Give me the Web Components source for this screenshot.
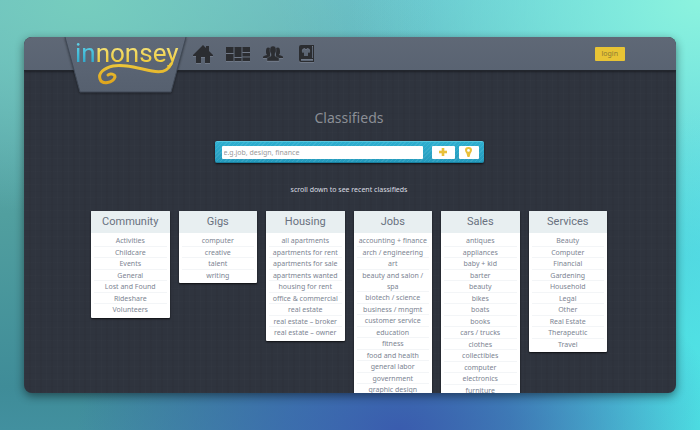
<!DOCTYPE html>
<html lang="en">
<head>
<meta charset="utf-8">
<meta name="viewport" content="width=device-width, initial-scale=1">
<title>inmonsey – Classifieds</title>
<style>
  * { box-sizing: border-box; }
  body {
    margin: 0;
    min-height: 100vh;
    font-family: "Noto Sans", "Open Sans", sans-serif;
    background:
      radial-gradient(ellipse 46% 48% at 57% 100%, #3a5cae 0%, #3a66b0cc 35%, #3a7ab000 100%),
      radial-gradient(ellipse 42% 75% at 100% 100%, #4ee6e5 0%, #4edde400 100%),
      radial-gradient(ellipse 50% 60% at 100% 0%, #8cf3de 0%, #7ce4dd00 100%),
      radial-gradient(ellipse 50% 50% at 12% 0%, #76cdbe 0%, #70c4bf00 100%),
      linear-gradient(90deg, #55cfdf00 40%, #55cfdf 100%),
      linear-gradient(180deg, #6ab6c2 0%, #519f9f 50%, #3f8c98 90%, #42909f 100%);
  }
</style>
</head>
<body>
<classifieds-app></classifieds-app>

<script>
const define = (name, html, setup) => {
  const template = document.createElement("template");
  template.innerHTML = "<style>*{box-sizing:border-box}</style>" + html;
  customElements.define(name, class extends HTMLElement {
    constructor() {
      super();
      this.attachShadow({ mode: "open" }).append(template.content.cloneNode(true));
    }
    connectedCallback() { if (setup) setup(this, this.shadowRoot); }
  });
};

define("brand-logo", `
  <style>
    :host { display: block; width: 121px; height: 56px; }
    a, svg { display: block; }
    text { font-family: Roboto, "Noto Sans", sans-serif; font-size: 26px; font-weight: 400; }
    svg { filter: drop-shadow(0 1px 1px #0006); overflow: visible; }
  </style>
  <a href="#" aria-label="inmonsey home">
    <svg width="121" height="56" viewBox="0 0 121 56">
      <defs>
        <linearGradient id="plate" x1="0" y1="0" x2="0" y2="1"><stop offset="0" stop-color="#5f6978"/><stop offset="1" stop-color="#56606f"/></linearGradient>
        <linearGradient id="gold" gradientUnits="userSpaceOnUse" x1="0" y1="4" x2="0" y2="46"><stop offset="0" stop-color="#f7ea8c"/><stop offset=".5" stop-color="#eecb3d"/><stop offset="1" stop-color="#dfa51d"/></linearGradient>
        <linearGradient id="aqua" gradientUnits="userSpaceOnUse" x1="0" y1="4" x2="0" y2="26"><stop offset="0" stop-color="#65d9ee"/><stop offset="1" stop-color="#2fa9cb"/></linearGradient>
      </defs>
      <path d="M0 0H121L106 55H15Z" fill="url(#plate)"/>
      <path d="M0 0L15 55H106L121 0" fill="none" stroke="#404956"/>
      <text x="10" y="25"><tspan fill="url(#aqua)">in</tspan><tspan fill="url(#gold)">nonsey</tspan></text>
      <path d="M106 27C103 34 96 36 87 34C72 31 60 27 48 29C39 31 33 36 35 42C37 48 48 46 50 40C50 37 45 36 43 38" fill="none" stroke="url(#gold)" stroke-width="3" stroke-linecap="round" stroke-linejoin="round"/>
    </svg>
  </a>`);

define("main-nav", `
  <style>
    :host { display: block; }
    nav { display: flex; align-items: center; gap: 13px; }
    a, svg { display: block; }
    a:last-child { margin-left: 3px; }
    svg { fill: #2b2d31; filter: drop-shadow(0 1px 0 #7d869499); }
  </style>
  <nav aria-label="Main">
    <a href="#home" aria-label="Home"><svg width="20" height="18" viewBox="0 0 20 18"><path d="M10 0L13 3V1H16V6L20 10V11H17V18H12V12H8V18H3V11H0V10Z"/></svg></a>
    <a href="#boards" aria-label="Boards"><svg width="24" height="14" viewBox="0 0 24 14"><path d="M0 0H7.500V6H0ZM0 7H7.500V14H0ZM8.500 0H15.500V10H8.500ZM8.500 11H15.500V14H8.500ZM16.500 0H24V5H16.500ZM16.500 6H24V9.500H16.500ZM16.500 10.500H24V14H16.500Z"/></svg></a>
    <a href="#people" aria-label="People"><svg width="20" height="15" viewBox="0 0 20 15"><path d="M3 5C3 1 5 1 7 2V12H0V11Q0 10 4 9C3 8 3 7 3 5ZM17 5C17 1 15 1 13 2V12H20V11Q20 10 16 9C17 8 17 7 17 5Z"/><path d="M10 0C13.500 0 14 5 12 8V10L16 12V15H4V12L8 10V8C6 5 6.500 0 10 0Z" stroke="#5c6573" stroke-width=".5"/></svg></a>
    <a href="#recipes" aria-label="Recipes"><svg width="15" height="17" viewBox="0 0 15 17"><path fill-rule="evenodd" d="M2 0H15V17H2Q0 17 0 15V2Q0 0 2 0ZM2 14V16H14V14ZM13 1V13H14V1ZM3.500 4Q2 6 3.500 8L5 7.500V11H9V7.500L10.500 8Q12 6 10.500 4L8.500 3Q7 5 5.500 3Z"/></svg></a>
  </nav>`);

define("top-bar", `
  <style>
    :host { display: block; position: relative; }
    header {
      display: flex; align-items: center; height: 34px; padding: 0 51px 0 41px;
      border-bottom: 1px solid #22262d;
      background: linear-gradient(#5f6876, #596372);
      box-shadow: 0 1px 2px #0006;
    }
    brand-logo { align-self: flex-start; }
    main-nav { margin-left: 7px; flex: 1; }
    button {
      height: 14px; padding: 0 7px; border: 0; border-radius: 1px;
      background: #e8c435; color: #8c7a34; font: 7px/14px "Noto Sans", sans-serif;
    }
  </style>
  <header><brand-logo></brand-logo><main-nav></main-nav><button type="button">login</button></header>`);

define("search-bar", `
  <style>
    :host { display: block; width: 269px; max-width: 100%; }
    form {
      display: flex; align-items: center; height: 22px; padding: 0 5px 0 7px; border-radius: 2px;
      background: repeating-linear-gradient(135deg, #ffffff14 0 1px, #0000 1px 3px), linear-gradient(#2eb0d1, #2499bb);
      box-shadow: inset 0 1px 0 #58c8e0, inset 0 -1px 0 #1a7f9e, 0 1px 2px #000a;
    }
    input, button { height: 13px; border: 0; border-radius: 1px; background: #fff; padding: 0; }
    input { flex: 1; min-width: 0; padding: 0 2px; font: 7px/13px "Noto Sans", sans-serif; color: #555; }
    input::placeholder { color: #999; opacity: 1; }
    button { display: grid; place-items: center; width: 23px; margin-left: 9px; }
    button + button { width: 20px; margin-left: 4px; }
    svg { display: block; fill: #e9c03a; }
  </style>
  <form role="search" onsubmit="return false">
    <input type="text" aria-label="Search classifieds" placeholder="e.g.job, design, finance">
    <button type="button" aria-label="Add classified"><svg width="8" height="8" viewBox="0 0 8 8"><path d="M3 0H5V3H8V5H5V8H3V5H0V3H3Z" stroke="#e9c03a" stroke-width=".6" stroke-linejoin="round"/></svg></button>
    <button type="button" aria-label="Choose location"><svg width="7" height="10" viewBox="0 0 7 10"><path fill-rule="evenodd" d="M3.500 0C8 0 7.500 4 5.500 6.500L4.500 10H2.500L1.500 6.500C-.5 4 -1 0 3.500 0ZM3.500 2A1.400 1.400 0 1 0 3.500 4.800A1.400 1.400 0 1 0 3.500 2Z"/></svg></button>
  </form>`);

define("category-card", `
  <style>
    :host { display: block; min-width: 0; background: #fff; border-radius: 1px; box-shadow: 0 1px 2px #000b; padding-bottom: 2px; }
    h2 {
      margin: 0 0 2px; text-align: center; color: #69717f; background: #e8eff1; border-radius: 1px 1px 0 0;
      font: 400 11px/22px Roboto, "Noto Sans", sans-serif;
    }
    ul { display: grid; grid-auto-rows: minmax(12px, auto) minmax(11px, auto); margin: 0; padding: 0 3px; list-style: none; text-align: center; }
    li { font-size: 7px; line-height: 11px; box-shadow: inset 0 -1px 0 #f3f5f7; }
    li:last-child { box-shadow: none; }
    a { color: #7c8492; text-decoration: none; }
  </style>
  <h2><slot></slot></h2><ul></ul>`,
  (host, root) => {
    root.querySelector("ul").replaceChildren(...host.getAttribute("items").split("|").map(label => {
      const li = document.createElement("li");
      const a = document.createElement("a");
      a.href = "#" + encodeURIComponent(label);
      a.textContent = label;
      li.append(a);
      return li;
    }));
  });

define("classifieds-app", `
  <style>
    :host { display: flex; height: 100vh; padding: 37px 24px; }
    .window {
      flex: 1; min-width: 0; overflow: hidden; border-radius: 8px;
      background:
        repeating-linear-gradient(90deg, #ffffff03 0 1px, #0000 1px 5px, #00000008 5px 7px, #0000 7px 11px),
        repeating-linear-gradient(0deg, #ffffff02 0 1px, #0000 1px 6px, #00000006 6px 7px, #0000 7px 13px),
        #2f343e;
      box-shadow: 0 3px 10px #0007;
    }
    main { display: flex; flex-direction: column; align-items: center; padding: 37px 69px 0 67px; }
    h1 { margin: 0 0 13px; font: 400 14px/20px "Noto Sans", sans-serif; color: #8b8e95; }
    p { margin: 22px 0 16px; font-size: 7px; line-height: 10px; color: #dcdee2; }
    .cards { display: grid; grid-template-columns: repeat(6, 1fr); gap: 9px; align-items: start; width: 100%; }
  </style>
  <div class="window">
    <top-bar></top-bar>
    <main>
      <h1>Classifieds</h1>
      <search-bar></search-bar>
      <p>scroll down to see recent classifieds</p>
      <div class="cards">
        <category-card items="Activities|Childcare|Events|General|Lost and Found|Rideshare|Volunteers">Community</category-card>
        <category-card items="computer|creative|talent|writing">Gigs</category-card>
        <category-card items="all apartments|apartments for rent|apartments for sale|apartments wanted|housing for rent|office &amp; commercial|real estate|real estate – broker|real estate – owner">Housing</category-card>
        <category-card items="accounting + finance|arch / engineering|art|beauty and salon / spa|biotech / science|business / mngmt|customer service|education|fitness|food and health|general labor|government|graphic design">Jobs</category-card>
        <category-card items="antiques|appliances|baby + kid|barter|beauty|bikes|boats|books|cars / trucks|clothes|collectibles|computer|electronics|furniture">Sales</category-card>
        <category-card items="Beauty|Computer|Financial|Gardening|Household|Legal|Other|Real Estate|Therapeutic|Travel">Services</category-card>
      </div>
    </main>
  </div>`);
</script>
</body>
</html>
